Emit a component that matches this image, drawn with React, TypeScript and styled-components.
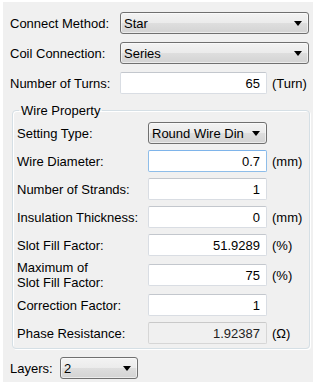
import React from 'react';
import styled, { createGlobalStyle } from 'styled-components';

const GlobalStyle = createGlobalStyle`
  html, body {
    margin: 0;
    padding: 0;
    background: #ffffff;
  }
  body {
    font-family: "Liberation Sans", Arial, sans-serif;
    font-size: 13px;
    color: #000000;
  }
`;

const Panel = styled.div`
  box-sizing: border-box;
  width: 310px;
  height: 380px;
  margin: 2px 0 0 3px;
  padding: 10px 4px 1px 7px;
  background-color: #f0f0f0;
  display: flex;
  flex-direction: column;
  gap: 8px;
`;

const Row = styled.div<{ $tall?: boolean }>`
  display: flex;
  align-items: center;
  height: ${(p) => (p.$tall ? '30px' : '22px')};
  margin: ${(p) => (p.$tall ? '-2px 0' : '0')};
`;

const Label = styled.div<{ $width: number }>`
  flex: none;
  width: ${(p) => p.$width}px;
  line-height: 15px;
  white-space: nowrap;
`;

const Dropdown = styled.div<{ $width?: number }>`
  box-sizing: border-box;
  display: flex;
  align-items: center;
  justify-content: space-between;
  height: 22px;
  width: ${(p) => (p.$width ? `${p.$width}px` : 'auto')};
  flex: ${(p) => (p.$width ? 'none' : '1')};
  padding: 0 6px 0 3px;
  border: 1px solid #707070;
  border-radius: 3px;
  background: linear-gradient(#f3f3f3 0%, #ebebeb 50%, #dedede 51%, #d3d3d3 100%);
  box-shadow: inset 0 0 0 1px rgba(255, 255, 255, 0.55);
  white-space: nowrap;
  overflow: hidden;
`;

const Field = styled.div<{ $width: number; $focus?: boolean; $readOnly?: boolean }>`
  box-sizing: border-box;
  flex: none;
  width: ${(p) => p.$width}px;
  height: 22px;
  display: flex;
  align-items: center;
  justify-content: flex-end;
  padding-right: 6px;
  border: 1px solid ${(p) => (p.$focus ? '#8ebde9' : p.$readOnly ? '#d6d6d6' : '#d9dde3')};
  border-top-color: ${(p) => (p.$focus ? '#7eb4ea' : p.$readOnly ? '#c9c9c9' : '#c3c7cd')};
  border-radius: 2px;
  background: ${(p) => (p.$readOnly ? '#f0f0f0' : '#ffffff')};
  color: ${(p) => (p.$readOnly ? '#222222' : '#000000')};
`;

const Unit = styled.span`
  margin-left: 5px;
  white-space: nowrap;
`;

const Group = styled.fieldset`
  box-sizing: border-box;
  width: 298px;
  margin: 1px 0 0 2px;
  padding: 4px 4px 4px 4px;
  border: 1px solid #d5dfe5;
  border-radius: 4px;
  box-shadow: inset 1px 1px 0 #ffffff, 1px 1px 0 #ffffff;
  display: flex;
  flex-direction: column;
  gap: 6px;
  min-width: 0;
`;

const Legend = styled.legend`
  margin-left: 2px;
  padding: 0 2px;
  line-height: 15px;
`;

const Arrow = () => (
  <svg width="8" height="5" viewBox="0 0 8 5">
    <path d="M0 0 H8 L4 5 Z" fill="#000" />
  </svg>
);

interface SelectProps {
  value: string;
  width?: number;
}

const Select: React.FC<SelectProps> = ({ value, width }) => (
  <Dropdown $width={width}>
    <span>{value}</span>
    <Arrow />
  </Dropdown>
);

interface ValueRowProps {
  label: React.ReactNode;
  value: string;
  unit?: string;
  focus?: boolean;
  readOnly?: boolean;
  tall?: boolean;
}

const GroupRow: React.FC<ValueRowProps> = ({ label, value, unit, focus, readOnly, tall }) => (
  <Row $tall={tall}>
    <Label $width={131}>{label}</Label>
    <Field $width={119} $focus={focus} $readOnly={readOnly}>{value}</Field>
    {unit && <Unit>{unit}</Unit>}
  </Row>
);

export default function App() {
  return (
    <>
      <GlobalStyle />
      <Panel>
        <Row>
          <Label $width={110}>Connect Method:</Label>
          <Select value="Star" />
        </Row>
        <Row>
          <Label $width={110}>Coil Connection:</Label>
          <Select value="Series" />
        </Row>
        <Row>
          <Label $width={110}>Number of Turns:</Label>
          <Field $width={147}>65</Field>
          <Unit>(Turn)</Unit>
        </Row>
        <Group>
          <Legend>Wire Property</Legend>
          <Row>
            <Label $width={131}>Setting Type:</Label>
            <Select value="Round Wire Din" width={119} />
          </Row>
          <GroupRow label="Wire Diameter:" value="0.7" unit="(mm)" focus />
          <GroupRow label="Number of Strands:" value="1" />
          <GroupRow label="Insulation Thickness:" value="0" unit="(mm)" />
          <GroupRow label="Slot Fill Factor:" value="51.9289" unit="(%)" />
          <GroupRow
            label={<>Maximum of<br />Slot Fill Factor:</>}
            value="75"
            unit="(%)"
            tall
          />
          <GroupRow label="Correction Factor:" value="1" />
          <GroupRow label="Phase Resistance:" value="1.92387" unit="(Ω)" readOnly />
        </Group>
        <Row>
          <Label $width={50}>Layers:</Label>
          <Select value="2" width={78} />
        </Row>
      </Panel>
    </>
  );
}
